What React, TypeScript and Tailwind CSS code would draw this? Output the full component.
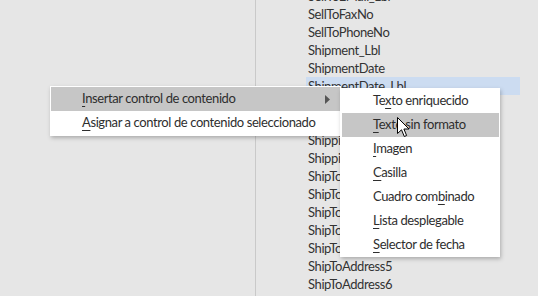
import React from 'react';

const fieldNames = [
  'SellToEMail_Lbl',
  'SellToFaxNo',
  'SellToPhoneNo',
  'Shipment_Lbl',
  'ShipmentDate',
  'ShipmentDate_Lbl',
  'ShipmentMethod',
  'ShipmentMethod_Lbl',
  'ShippingAgentCode',
  'ShippingAgentName',
  'ShipToAddr_Lbl',
  'ShipToAddress1',
  'ShipToAddress2',
  'ShipToAddress3',
  'ShipToAddress4',
  'ShipToAddress5',
  'ShipToAddress6',
  'ShipToAddress7',
];

// access key rendered with an underline, like a Windows menu
function Key({ children }: { children: React.ReactNode }) {
  return <u className="underline decoration-1 underline-offset-[3px]">{children}</u>;
}

type SubItem = { pre: string; key: string; post: string };

const subItems: SubItem[] = [
  { pre: 'Te', key: 'x', post: 'to enriquecido' },
  { pre: '', key: 'T', post: 'exto sin formato' },
  { pre: '', key: 'I', post: 'magen' },
  { pre: '', key: 'C', post: 'asilla' },
  { pre: 'Cuadro com', key: 'b', post: 'inado' },
  { pre: '', key: 'L', post: 'ista desplegable' },
  { pre: '', key: 'S', post: 'elector de fecha' },
];

export default function App() {
  return (
    <div
      className="relative w-[538px] h-[296px] overflow-hidden bg-[#e6e6e6] text-[#333333] whitespace-nowrap tracking-[-0.4px]"
      style={{ fontFamily: 'Lato, "Noto Sans", sans-serif' }}
    >
      <div className="flex h-full">
        <div className="w-[256px] h-full border-r border-[#c9c9c9]" />
        <div className="flex-1">
          <div className="ml-[50px] mt-[-13px] w-[214px]">
            {fieldNames.map((name) => (
              <div
                key={name}
                className={`h-[18px] pl-[2px] flex items-center text-[13px] leading-none ${
                  name === 'ShipmentDate_Lbl' ? 'bg-[#ccdcf1]' : ''
                }`}
              >
                {name}
              </div>
            ))}
          </div>
        </div>
      </div>

      {/* context menu */}
      <div className="absolute left-[50px] top-[86px] w-[291px] bg-white py-[1px] shadow-[1px_2px_4px_rgba(0,0,0,0.25)] text-[13px] text-[#2e2e2e]">
        <div className="relative h-[24px] mx-[1px] flex items-center pl-[31px] bg-[#c6c6c6]">
          <span>
            <Key>I</Key>nsertar control de contenido
          </span>
          <svg className="absolute right-[10px] top-[8px]" width="5" height="9" viewBox="0 0 5 9">
            <path d="M0 0 L5 4.5 L0 9 Z" fill="#555555" />
          </svg>
        </div>
        <div className="h-[24px] mx-[1px] flex items-center pl-[31px]">
          <span>
            <Key>A</Key>signar a control de contenido seleccionado
          </span>
        </div>
      </div>

      {/* submenu */}
      <div className="absolute left-[340px] top-[88px] w-[160px] h-[169px] bg-white pt-[1px] shadow-[1px_2px_4px_rgba(0,0,0,0.25)] text-[13px] text-[#2e2e2e]">
        {subItems.map((it, i) => (
          <div
            key={it.post}
            className={`h-[24px] ml-[2px] mr-[1px] flex items-center pl-[31px] ${
              i === 1 ? 'bg-[#c6c6c6]' : ''
            }`}
          >
            <span>
              {it.pre}
              <Key>{it.key}</Key>
              {it.post}
            </span>
          </div>
        ))}
      </div>

      {/* mouse pointer */}
      <svg className="absolute left-[397px] top-[117px]" width="13" height="21" viewBox="0 0 13 21">
        <path
          d="M0.5 0.5 L0.5 16.5 L4.5 12.8 L7.3 19.5 L9.6 18.5 L6.9 12 L12 12 Z"
          fill="#ffffff"
          stroke="#000000"
          strokeWidth="1"
          strokeLinejoin="round"
        />
      </svg>
    </div>
  );
}
